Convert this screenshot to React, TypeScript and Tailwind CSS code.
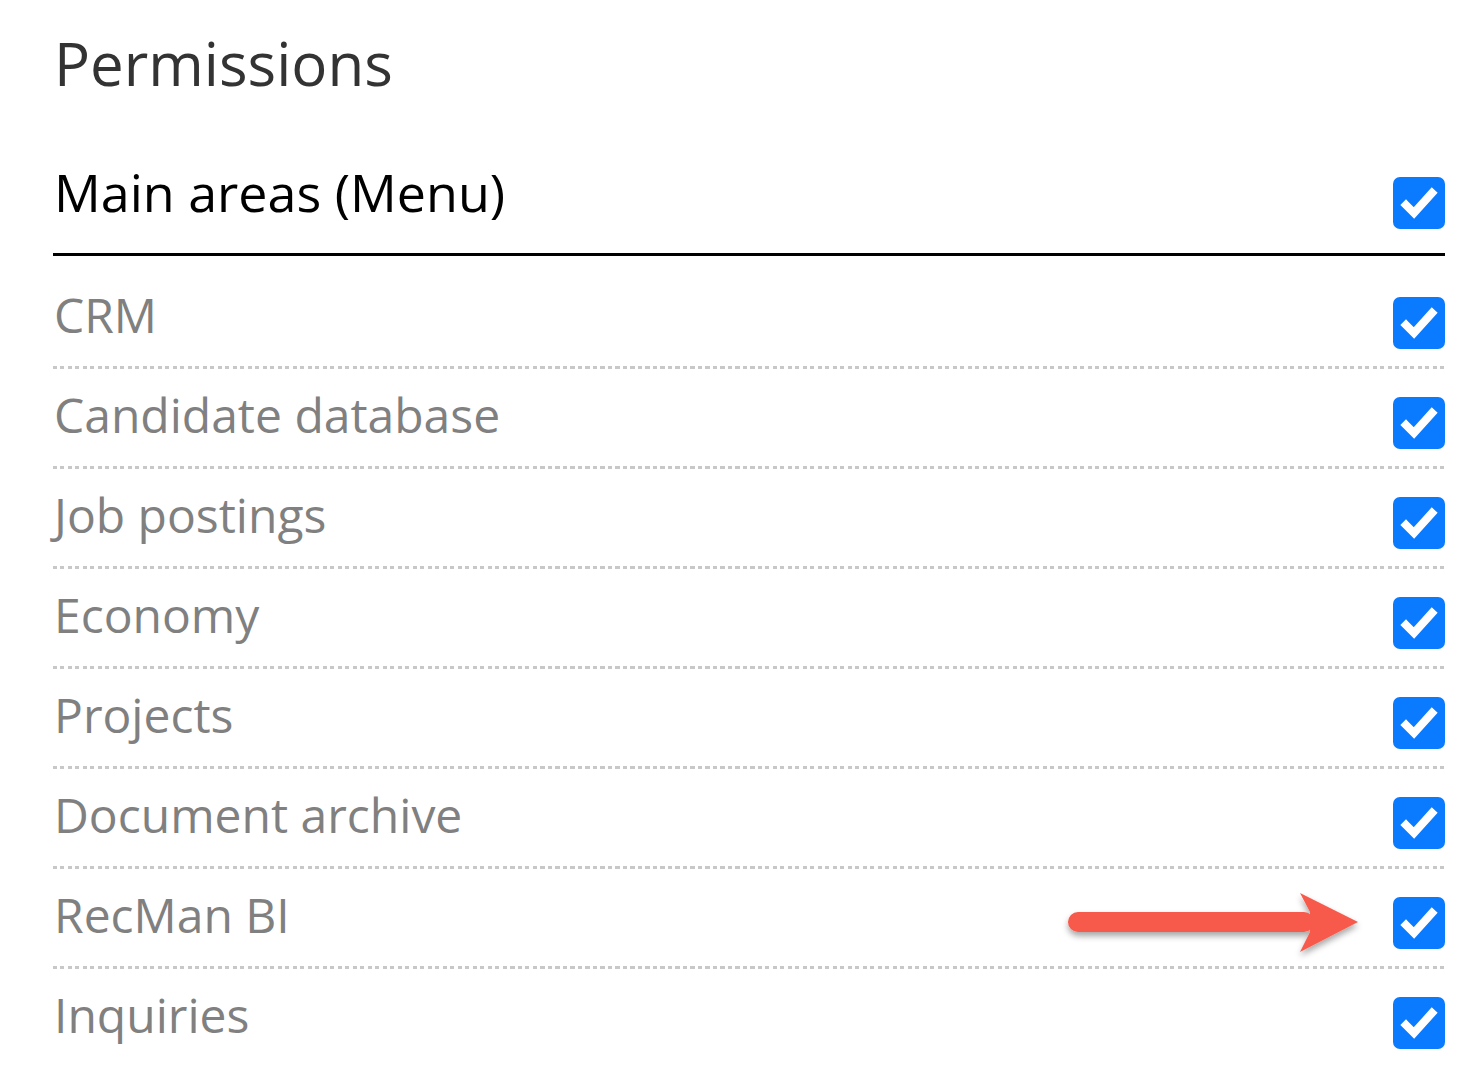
import React from "react";

const Check = () => (
  <div className="w-[52px] h-[52px] rounded-[7px] bg-[#0a7aff] flex-none">
    <svg width="52" height="52" viewBox="0 0 52 52">
      <path d="M13 28 L21 36 L39 16" fill="none" stroke="#fff" strokeWidth="8" strokeLinecap="square" strokeLinejoin="miter" />
    </svg>
  </div>
);

const Arrow = () => (
  <svg
    className="absolute left-[957px] top-[16px] pointer-events-none"
    width="360"
    height="80"
    viewBox="1010 885 360 80"
  >
    <defs>
      <filter id="sh" x="-10%" y="-40%" width="120%" height="180%">
        <feDropShadow dx="0" dy="4" stdDeviation="3" floodColor="#000" floodOpacity="0.35" />
      </filter>
    </defs>
    <g filter="url(#sh)" fill="#f75a4b">
      <rect x="1068" y="912" width="246" height="20" rx="10" />
      <polygon points="1300,893 1358,922 1300,952 1310,932 1310,912" />
    </g>
  </svg>
);

const rows = [
  "CRM",
  "Candidate database",
  "Job postings",
  "Economy",
  "Projects",
  "Document archive",
  "RecMan BI",
  "Inquiries",
];

export default function App() {
  return (
    <div className="w-[1476px] min-h-[1088px] bg-white pl-[53px] pr-[31px] font-['Open_Sans',sans-serif] overflow-hidden">
      <h1 className="mt-[21px] text-[60px] leading-[84px] text-[#333333] font-normal pl-[1px]">
        Permissions
      </h1>
      <div className="mt-[51px] h-[97px] flex items-start justify-between">
        <span className="text-[52px] leading-[71px] text-black pl-[1px]">Main areas (Menu)</span>
        <div className="mt-[21px]">
          <Check />
        </div>
      </div>
      <div className="h-[3px] bg-black" />
      <div className="mt-[13px]">
        {rows.map((r, i) => (
          <div key={r}>
            <div className="relative h-[97px] flex items-start justify-between">
              <span className="mt-[14px] text-[48px] leading-[63px] text-[#808080] pl-[1px]">{r}</span>
              <div className="mt-[28px]">
                <Check />
              </div>
              {r === "RecMan BI" && <Arrow />}
            </div>
            {i < rows.length - 1 && (
              <div className="h-[3px] bg-[repeating-linear-gradient(90deg,#c8c8c8_0_4px,transparent_4px_7.5px)]" />
            )}
          </div>
        ))}
      </div>
    </div>
  );
}
